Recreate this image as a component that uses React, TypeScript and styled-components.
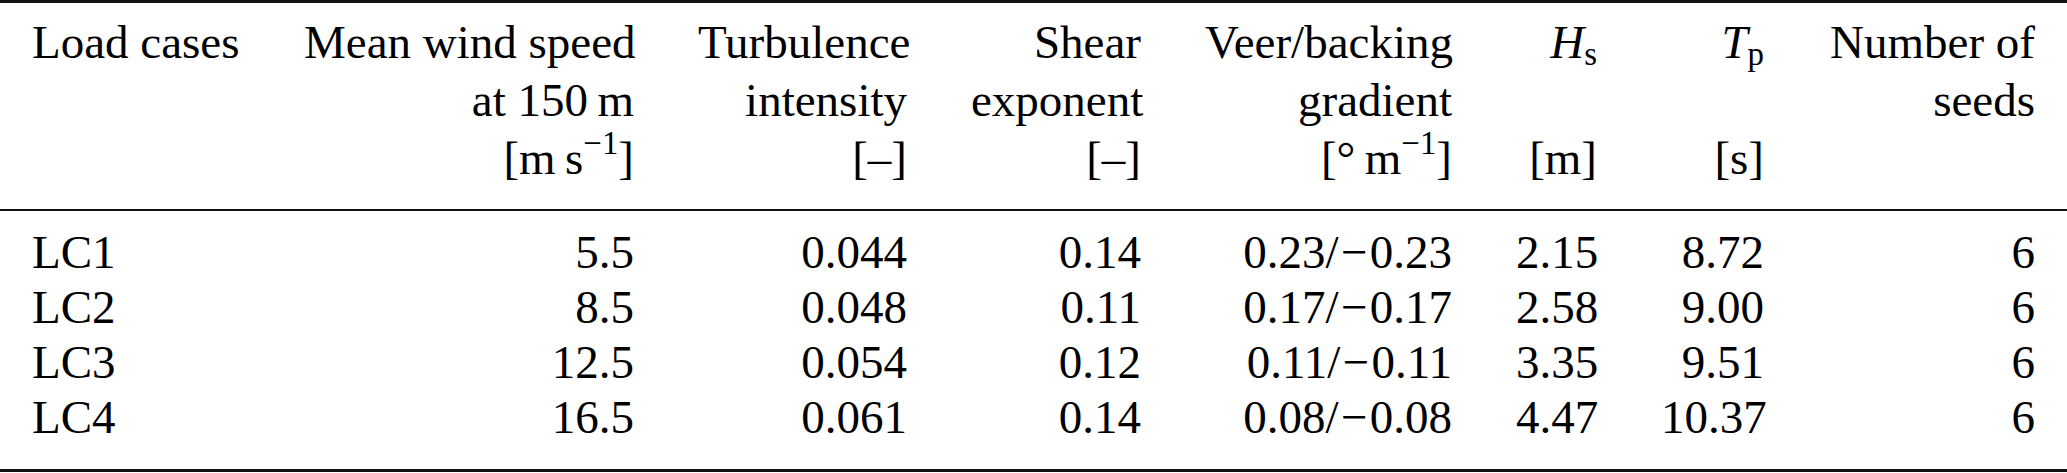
import React from 'react';
import styled, { createGlobalStyle } from 'styled-components';

const GlobalStyle = createGlobalStyle`
  html,
  body {
    margin: 0;
    padding: 0;
    background: #fff;
    font-family: "Liberation Serif", "Times New Roman", serif;
  }
`;

type Align = 'left' | 'right';

const Frame = styled.div`
  width: 2067px;
  border-top: 3px solid #111;
  border-bottom: 3px solid #111;
  color: #000;
`;

const Table = styled.table`
  width: 2067px;
  table-layout: fixed;
  border-collapse: separate;
  border-spacing: 0;
  font-family: "Liberation Serif", "Times New Roman", serif;
  font-size: 47px;
  color: #000;
`;

const Col = styled.col<{ $width: number }>`
  width: ${(p) => p.$width}px;
`;

const HeadCell = styled.th<{ $align: Align; $first: boolean; $last: boolean }>`
  padding: ${(p) => (p.$first ? 10 : 0)}px 32px ${(p) => (p.$last ? 22 : 0)}px;
  text-align: ${(p) => p.$align};
  white-space: nowrap;
  vertical-align: baseline;
  font-family: "Liberation Serif", "Times New Roman", serif;
  font-weight: normal;
  line-height: 58px;
  border-bottom: ${(p) => (p.$last ? '2px solid #111' : 'none')};
`;

const BodyCell = styled.td<{ $align: Align; $first: boolean; $last: boolean }>`
  padding: ${(p) => (p.$first ? 14 : 0)}px 32px ${(p) => (p.$last ? 24 : 0)}px;
  text-align: ${(p) => p.$align};
  white-space: nowrap;
  vertical-align: baseline;
  font-family: "Liberation Serif", "Times New Roman", serif;
  line-height: 55px;
`;

const Var = styled.i`
  font-style: italic;
`;

const Sub = styled.span`
  font-size: 0.7em;
  line-height: 0;
  vertical-align: -0.2em;
`;

const Sup = styled.span`
  font-size: 0.7em;
  line-height: 0;
  vertical-align: 0.6em;
`;

const Minus = styled.span`
  margin: 0 0.05em;
`;

// "0.23/-0.23" -> pair of values with a math minus in between
const Pair: React.FC<{ a: string; b: string }> = ({ a, b }) => (
  <>
    {a}/<Minus>−</Minus>
    {b}
  </>
);

const widths = [272, 394, 273, 234, 311, 145, 167, 271];
const aligns: Align[] = ['left', 'right', 'right', 'right', 'right', 'right', 'right', 'right'];

const header: React.ReactNode[][] = [
  [
    'Load cases',
    'Mean wind speed',
    'Turbulence',
    'Shear',
    'Veer/backing',
    <>
      <Var>H</Var>
      <Sub>s</Sub>
    </>,
    <>
      <Var>T</Var>
      <Sub>p</Sub>
    </>,
    'Number of',
  ],
  ['', 'at 150\u2009m', 'intensity', 'exponent', 'gradient', '', '', 'seeds'],
  [
    '',
    <>
      [m{'\u2009'}s<Sup>−1</Sup>]
    </>,
    '[–]',
    '[–]',
    <>
      [°{'\u2009'}m<Sup>−1</Sup>]
    </>,
    '[m]',
    '[s]',
    '',
  ],
];

const rows: React.ReactNode[][] = [
  ['LC1', '5.5', '0.044', '0.14', <Pair a="0.23" b="0.23" />, '2.15', '8.72', '6'],
  ['LC2', '8.5', '0.048', '0.11', <Pair a="0.17" b="0.17" />, '2.58', '9.00', '6'],
  ['LC3', '12.5', '0.054', '0.12', <Pair a="0.11" b="0.11" />, '3.35', '9.51', '6'],
  ['LC4', '16.5', '0.061', '0.14', <Pair a="0.08" b="0.08" />, '4.47', '10.37', '6'],
];

export default function App() {
  return (
    <>
      <GlobalStyle />
      <Frame>
        <Table>
          <colgroup>
            {widths.map((w, i) => (
              <Col key={i} $width={w} />
            ))}
          </colgroup>
          <thead>
            {header.map((row, r) => (
              <tr key={r}>
                {row.map((cell, c) => (
                  <HeadCell key={c} $align={aligns[c]} $first={r === 0} $last={r === header.length - 1}>
                    {cell}
                  </HeadCell>
                ))}
              </tr>
            ))}
          </thead>
          <tbody>
            {rows.map((row, r) => (
              <tr key={r}>
                {row.map((cell, c) => (
                  <BodyCell key={c} $align={aligns[c]} $first={r === 0} $last={r === rows.length - 1}>
                    {cell}
                  </BodyCell>
                ))}
              </tr>
            ))}
          </tbody>
        </Table>
      </Frame>
    </>
  );
}
